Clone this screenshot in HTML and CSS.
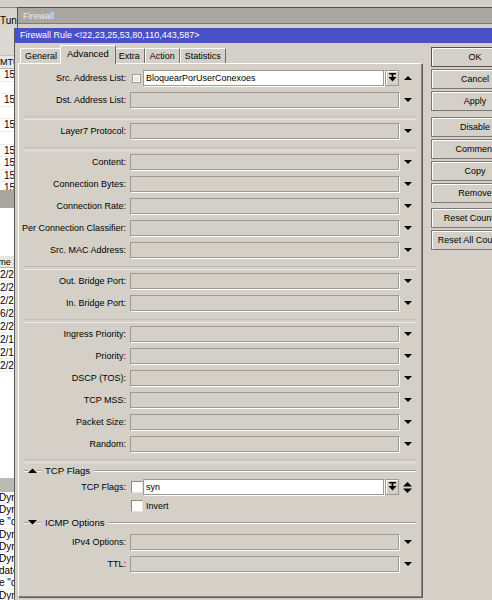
FILE: index.html
```html
<!DOCTYPE html>
<html>
<head>
<meta charset="utf-8">
<link rel="stylesheet" href="styles.css">
</head>
<body>
<div class="desk">
  <div class="bgwin">
    <div class="bg-top"></div>
    <div class="bg-head">Tun</div>
    <div class="bg-gap"></div>
    <div class="bg-colhead">MTU</div>
    <div class="bg-rows rows-a">
      <div class="r num">15</div><div class="r"></div>
      <div class="r num">15</div><div class="r"></div>
      <div class="r num">15</div><div class="r"></div>
      <div class="r num">15</div><div class="r num">15</div>
      <div class="r num">15</div><div class="r num">15</div>
    </div>
    <div class="bg-band"></div>
    <div class="bg-white w1"></div>
    <div class="bg-colhead shift">Time S</div>
    <div class="bg-rows rows-b">
      <div class="r">2/2</div><div class="r">2/2</div><div class="r">2/2</div><div class="r">6/2</div>
      <div class="r">2/2</div><div class="r">2/1</div><div class="r">2/1</div><div class="r">2/2</div>
    </div>
    <div class="bg-white w2"></div>
    <div class="bg-band2"></div>
    <div class="bg-rows rows-c">
      <div class="r">Dyn1</div><div class="r">Dyn1</div><div class="r">e "d</div>
      <div class="r">Dyn1</div><div class="r">Dyn1</div><div class="r">Dyn1</div>
      <div class="r">date</div><div class="r">e "d</div><div class="r">Dyn1</div>
    </div>
  </div>

  <div class="fwwin">
    <div class="fw-title">Firewall</div>
  </div>

  <div class="dialog">
    <div class="dlg-title">Firewall Rule &lt;!22,23,25,53,80,110,443,587&gt;</div>
    <div class="dlg-body">
      <div class="main">
        <div class="tabs">
          <div class="tab t-general">General</div>
          <div class="tab sel">Advanced</div>
          <div class="tab">Extra</div>
          <div class="tab">Action</div>
          <div class="tab">Statistics</div>
        </div>
        <div class="panel">
          <div class="row">
            <div class="lbl">Src. Address List:</div>
            <div class="boxcol"><svg class="dotbox" width="9" height="9" viewBox="0 0 9 9"><rect x="0.5" y="0.5" width="8" height="8" fill="#fff" stroke="#555" stroke-dasharray="1 1"/><rect x="2" y="2" width="5" height="5" fill="#e8e8e8"/></svg></div>
            <div class="fld white narrow">BloquearPorUserConexoes</div>
            <div class="mini"><svg width="9" height="10" viewBox="0 0 9 10"><rect x="1" y="0" width="7" height="1.4" fill="#000"/><rect x="3.6" y="1" width="1.8" height="3" fill="#000"/><path d="M0.5 4H8.5L4.5 8.5Z" fill="#000"/></svg></div>
            <div class="arr"><svg width="8" height="4" viewBox="0 0 8 4"><path d="M0 4H8L4 0Z" fill="#000"/></svg></div>
          </div>
          <div class="row">
            <div class="lbl">Dst. Address List:</div>
            <div class="fld"></div>
            <div class="arr"><svg width="8" height="4" viewBox="0 0 8 4"><path d="M0 0H8L4 4Z" fill="#000"/></svg></div>
          </div>
          <div class="sep"></div>
          <div class="row">
            <div class="lbl">Layer7 Protocol:</div>
            <div class="fld"></div>
            <div class="arr"><svg width="8" height="4" viewBox="0 0 8 4"><path d="M0 0H8L4 4Z" fill="#000"/></svg></div>
          </div>
          <div class="sep"></div>
          <div class="row">
            <div class="lbl">Content:</div>
            <div class="fld"></div>
            <div class="arr"><svg width="8" height="4" viewBox="0 0 8 4"><path d="M0 0H8L4 4Z" fill="#000"/></svg></div>
          </div>
          <div class="row">
            <div class="lbl">Connection Bytes:</div>
            <div class="fld"></div>
            <div class="arr"><svg width="8" height="4" viewBox="0 0 8 4"><path d="M0 0H8L4 4Z" fill="#000"/></svg></div>
          </div>
          <div class="row">
            <div class="lbl">Connection Rate:</div>
            <div class="fld"></div>
            <div class="arr"><svg width="8" height="4" viewBox="0 0 8 4"><path d="M0 0H8L4 4Z" fill="#000"/></svg></div>
          </div>
          <div class="row">
            <div class="lbl">Per Connection Classifier:</div>
            <div class="fld"></div>
            <div class="arr"><svg width="8" height="4" viewBox="0 0 8 4"><path d="M0 0H8L4 4Z" fill="#000"/></svg></div>
          </div>
          <div class="row">
            <div class="lbl">Src. MAC Address:</div>
            <div class="fld"></div>
            <div class="arr"><svg width="8" height="4" viewBox="0 0 8 4"><path d="M0 0H8L4 4Z" fill="#000"/></svg></div>
          </div>
          <div class="sep"></div>
          <div class="row">
            <div class="lbl">Out. Bridge Port:</div>
            <div class="fld"></div>
            <div class="arr"><svg width="8" height="4" viewBox="0 0 8 4"><path d="M0 0H8L4 4Z" fill="#000"/></svg></div>
          </div>
          <div class="row">
            <div class="lbl">In. Bridge Port:</div>
            <div class="fld"></div>
            <div class="arr"><svg width="8" height="4" viewBox="0 0 8 4"><path d="M0 0H8L4 4Z" fill="#000"/></svg></div>
          </div>
          <div class="sep"></div>
          <div class="row">
            <div class="lbl">Ingress Priority:</div>
            <div class="fld"></div>
            <div class="arr"><svg width="8" height="4" viewBox="0 0 8 4"><path d="M0 0H8L4 4Z" fill="#000"/></svg></div>
          </div>
          <div class="row">
            <div class="lbl">Priority:</div>
            <div class="fld"></div>
            <div class="arr"><svg width="8" height="4" viewBox="0 0 8 4"><path d="M0 0H8L4 4Z" fill="#000"/></svg></div>
          </div>
          <div class="row">
            <div class="lbl">DSCP (TOS):</div>
            <div class="fld"></div>
            <div class="arr"><svg width="8" height="4" viewBox="0 0 8 4"><path d="M0 0H8L4 4Z" fill="#000"/></svg></div>
          </div>
          <div class="row">
            <div class="lbl">TCP MSS:</div>
            <div class="fld"></div>
            <div class="arr"><svg width="8" height="4" viewBox="0 0 8 4"><path d="M0 0H8L4 4Z" fill="#000"/></svg></div>
          </div>
          <div class="row">
            <div class="lbl">Packet Size:</div>
            <div class="fld"></div>
            <div class="arr"><svg width="8" height="4" viewBox="0 0 8 4"><path d="M0 0H8L4 4Z" fill="#000"/></svg></div>
          </div>
          <div class="row">
            <div class="lbl">Random:</div>
            <div class="fld"></div>
            <div class="arr"><svg width="8" height="4" viewBox="0 0 8 4"><path d="M0 0H8L4 4Z" fill="#000"/></svg></div>
          </div>
          <div class="sep sep-tight"></div>
          <div class="sect">
            <div class="sline stub"></div>
            <svg class="stri" width="9" height="5" viewBox="0 0 9 5"><path d="M0 5H9L4.5 0.5Z" fill="#000"/></svg>
            <div class="sline stub"></div>
            <div class="stext">TCP Flags</div>
            <div class="sline grow"></div>
          </div>
          <div class="row row-tcp">
            <div class="lbl">TCP Flags:</div>
            <div class="boxcol"><div class="chk"></div></div>
            <div class="fld white narrow">syn</div>
            <div class="mini"><svg width="9" height="10" viewBox="0 0 9 10"><rect x="1" y="0" width="7" height="1.4" fill="#000"/><rect x="3.6" y="1" width="1.8" height="3" fill="#000"/><path d="M0.5 4H8.5L4.5 8.5Z" fill="#000"/></svg></div>
            <div class="arr"><svg width="9" height="11" viewBox="0 0 9 11"><path d="M0 4.5H9L4.5 0Z" fill="#000"/><path d="M0 6.5H9L4.5 11Z" fill="#000"/></svg></div>
          </div>
          <div class="row row-inv">
            <div class="lbl"></div>
            <div class="boxcol"><div class="chk"></div></div>
            <div class="invlbl">Invert</div>
          </div>
          <div class="sect sect-icmp">
            <div class="sline stub"></div>
            <svg class="stri" width="9" height="5" viewBox="0 0 9 5"><path d="M0 0H9L4.5 4.5Z" fill="#000"/></svg>
            <div class="sline stub"></div>
            <div class="stext">ICMP Options</div>
            <div class="sline grow"></div>
          </div>
          <div class="row">
            <div class="lbl">IPv4 Options:</div>
            <div class="fld"></div>
            <div class="arr"><svg width="8" height="4" viewBox="0 0 8 4"><path d="M0 0H8L4 4Z" fill="#000"/></svg></div>
          </div>
          <div class="row">
            <div class="lbl">TTL:</div>
            <div class="fld"></div>
            <div class="arr"><svg width="8" height="4" viewBox="0 0 8 4"><path d="M0 0H8L4 4Z" fill="#000"/></svg></div>
          </div>
        </div>
      </div>
      <div class="buttons">
        <div class="btn default">OK</div>
        <div class="btn">Cancel</div>
        <div class="btn">Apply</div>
        <div class="btn gap1">Disable</div>
        <div class="btn">Comment</div>
        <div class="btn">Copy</div>
        <div class="btn">Remove</div>
        <div class="btn gap2">Reset Counters</div>
        <div class="btn">Reset All Counters</div>
      </div>
    </div>
  </div>
</div>
</body>
</html>
```

FILE: styles.css
```css
* { box-sizing: border-box; }
html, body { margin: 0; padding: 0; }
body {
  width: 492px;
  height: 600px;
  overflow: hidden;
  background: #d4d0c8;
  font-family: "Liberation Sans", Arial, sans-serif;
  font-size: 9px;
  color: #000;
}
.desk { position: relative; width: 492px; height: 600px; overflow: hidden; }

/* background list window on the left */
.bgwin {
  position: absolute;
  left: 0; top: 0;
  width: 18px; height: 600px;
  overflow: hidden;
  background: #fff;
  white-space: nowrap;
}
.bg-top { height: 8px; background: #d4d0c8; border-bottom: 1px solid #8a8782; }
.bg-head { height: 20px; background: #d8d5cf; padding-top: 4px; line-height: 18px; font-size: 10px; }
.bg-gap { height: 28px; background: #dcd9d3; border-bottom: 1px solid #c4c1bb; }
.bg-colhead { height: 13px; line-height: 13px; background: #e9e6e0; border-bottom: 1px solid #b8b5af; }
.bg-colhead.shift { margin-left: -9px; height: 12px; line-height: 12px; }
.bg-rows { overflow: hidden; background: #fff; }
.rows-a { height: 121px; }
.rows-a .r { height: 12.6px; line-height: 12.6px; }
.r.num { text-align: right; padding-right: 3px; font-size: 10px; }
.rows-a .r { border-bottom: 1px solid #ececec; }
.bg-band { height: 18px; background: #a9a6a0; }
.bg-white.w1 { height: 48px; background: #fff; }
.rows-b { height: 104px; }
.rows-b .r { height: 13px; line-height: 13px; font-size: 10px; border-bottom: 1px solid #efefef; }
.bg-white.w2 { height: 106px; background: #fff; }
.bg-band2 { height: 14px; background: #bdbab4; }
.rows-c { height: 108px; }
.rows-c .r { height: 12.2px; line-height: 12.2px; margin-left: -1px; font-size: 10px; border-bottom: 1px solid #efefef; }

/* firewall window behind */
.fwwin {
  position: absolute;
  left: 17px; top: 7px;
  width: 480px; height: 24px;
  background: #d4d0c8;
  border-left: 1px solid #55524d;
  border-top: 1px solid #55524d;
}
.fw-title {
  height: 16px;
  line-height: 17px;
  padding-left: 5px;
  background: #aaa7a1;
  color: #ececec;
  border-bottom: 1px solid #7d7a75;
}

/* dialog */
.dialog {
  position: absolute;
  left: 14px; top: 28px;
  width: 520px; height: 600px;
  background: #d4d0c8;
  border-left: 1px solid #5c5a56;
}
.dlg-title {
  height: 15px;
  line-height: 15px;
  padding-left: 5px;
  background: #4a50c8;
  color: #fff;
  white-space: nowrap;
}
.dlg-body { display: flex; padding-left: 3px; padding-top: 2px; }
.main { width: 404px; flex: none; }

.tabs { display: flex; align-items: flex-end; height: 18px; padding-left: 2px; }
.tab {
  height: 15px;
  line-height: 14px;
  padding: 0 4px;
  border-top: 1px solid #fff;
  border-left: 1px solid #fff;
  border-right: 1px solid #6f6c67;
  white-space: nowrap;
  background: #d4d0c8;
}
.tab.sel {
  position: relative;
  z-index: 1;
  height: 19px;
  margin: 0 -2px -1px -2px;
  padding: 0 6px 3px 6px;
  line-height: 15px;
  font-size: 9.4px;
}

.panel {
  height: 534px;
  border-top: 1px solid #fff;
  border-left: 1px solid #fff;
  border-right: 1px solid #8a8782;
  border-bottom: 1px solid #8a8782;
  box-shadow: 1px 1px 0 #5c5a56;
  padding-top: 3px;
}

.row { display: flex; align-items: center; height: 22px; }
.lbl { width: 107px; margin-right: 4px; text-align: right; white-space: nowrap; flex: none; }
.fld {
  width: 269px; height: 16px;
  flex: none;
  border: 1px solid #9d9a94;
  box-shadow: 1px 1px 0 #fff;
  line-height: 14px;
  padding-left: 2px;
  white-space: nowrap;
  overflow: hidden;
}
.fld.white { background: #fff; }
.fld.narrow { width: 241px; }
.boxcol { width: 13px; flex: none; display: flex; align-items: center; padding-left: 1px; }
.dotbox { display: block; margin-left: 1px; }
.mini {
  width: 14px; height: 16px;
  margin-left: 1px;
  flex: none;
  border: 1px solid #9d9a94;
  box-shadow: inset 1px 1px 0 #fff;
  display: flex; align-items: center; justify-content: center;
}
.mini svg { display: block; }
.arr { width: 17px; flex: none; display: flex; justify-content: center; align-items: center; }
.arr svg { display: block; }

.chk {
  width: 12px; height: 12px;
  background: #fff;
  border: 1px solid;
  border-color: #8d8a84 #e4e2de #e4e2de #8d8a84;
}

.sep { height: 9px; padding-top: 5px; }
.sep::before {
  content: "";
  display: block;
  margin: 0 5px;
  height: 2px;
  border-top: 1px solid #c2bfb8;
  border-bottom: 1px solid #ebe9e5;
}
.sep.sep-tight { padding-top: 4px; }

.sect { display: flex; align-items: center; height: 13px; padding: 0 5px; }
.sect-icmp { height: 17px; }
.sline { height: 2px; border-top: 1px solid #a09d96; border-bottom: 1px solid #fff; }
.sline.stub { width: 4px; flex: none; }
.sline.grow { flex: 1; margin-left: 4px; }
.stri { display: block; flex: none; }
.stext { margin-left: 4px; white-space: nowrap; font-size: 9.6px; }

.row-tcp { height: 20px; }
.row-inv { height: 17px; }
.invlbl { margin-left: 3px; }

.buttons { margin-left: 9px; padding-top: 2px; width: 88px; flex: none; }
.btn {
  height: 20px;
  margin-bottom: 2px;
  line-height: 18px;
  text-align: center;
  white-space: nowrap;
  border: 1px solid #7b7873;
  box-shadow: inset 1px 1px 0 #fff;
  background: #d4d0c8;
}
.btn.default { border-color: #56534f; }
.btn.gap1 { margin-top: 6px; }
.btn.gap2 { margin-top: 5px; }
```
